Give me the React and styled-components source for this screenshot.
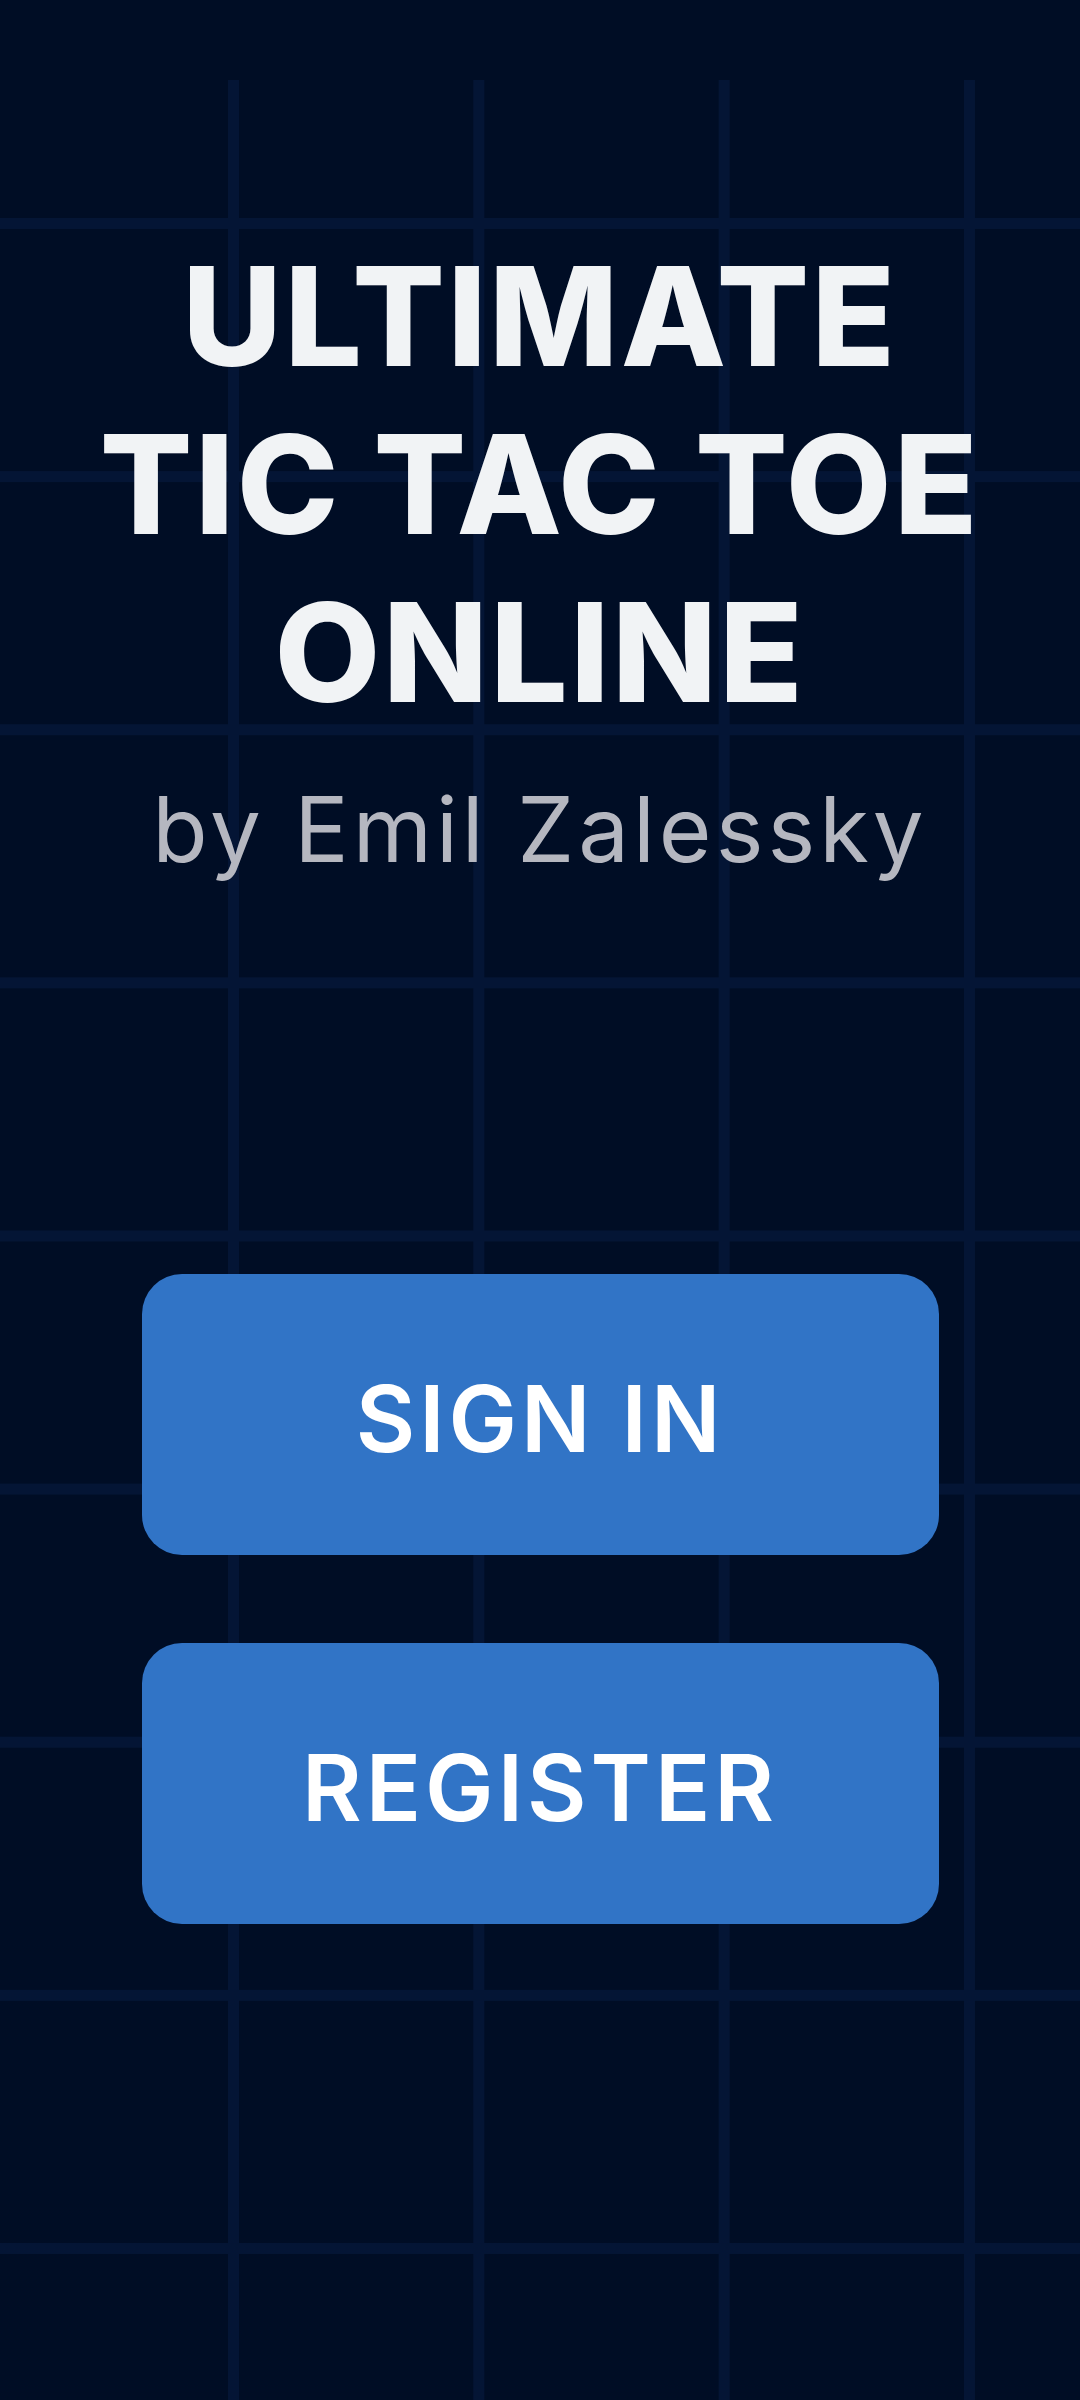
import React from "react";
import styled, { createGlobalStyle } from "styled-components";

const Global = createGlobalStyle`
  html, body { margin: 0; padding: 0; background: #000d25; }
  * { box-sizing: border-box; }
`;

const Screen = styled.div`
  width: 1080px;
  min-height: 2400px;
  background: #000d25;
  padding-top: 80px;
  font-family: Inter, "Noto Sans", sans-serif;
`;

const Board = styled.main`
  min-height: 2320px;
  display: flex;
  flex-direction: column;
  align-items: center;
  padding-top: 152px;
  background-color: #000d25;
  background-image:
    linear-gradient(to right, #041535 0 10.5px, transparent 10.5px),
    linear-gradient(to bottom, #041535 0 10.5px, transparent 10.5px);
  background-size: 245.33px 100%, 100% 253.125px;
  background-position: 228px 0, 0 138px;
`;

const Title = styled.h1`
  margin: 0;
  color: #f1f3f5;
  font-size: 137px;
  font-weight: 800;
  line-height: 168px;
  letter-spacing: 2.5px;
  text-align: center;
`;

const TitleLine = styled.span`
  display: block;
  white-space: nowrap;
`;

const Byline = styled.p`
  margin: 39px 0 0;
  color: #b5b7c0;
  font-size: 90.5px;
  font-weight: 400;
  line-height: 109px;
  letter-spacing: 4px;
  white-space: nowrap;
`;

const Actions = styled.div`
  margin-top: 390px;
  width: 797px;
  display: flex;
  flex-direction: column;
  gap: 88px;
`;

const ActionButton = styled.button`
  height: 281px;
  padding: 9px 0 0;
  border: none;
  border-radius: 40px;
  background: #3174c6;
  color: #ffffff;
  font-family: inherit;
  font-size: 91.5px;
  font-weight: 600;
  line-height: 1.2;
  letter-spacing: 4px;
  cursor: pointer;
`;

export default function App() {
  return (
    <Screen>
      <Global />
      <Board>
        <Title>
          <TitleLine>ULTIMATE</TitleLine>
          <TitleLine>TIC TAC TOE</TitleLine>
          <TitleLine>ONLINE</TitleLine>
        </Title>
        <Byline>by Emil Zalessky</Byline>
        <Actions>
          <ActionButton>SIGN IN</ActionButton>
          <ActionButton>REGISTER</ActionButton>
        </Actions>
      </Board>
    </Screen>
  );
}
